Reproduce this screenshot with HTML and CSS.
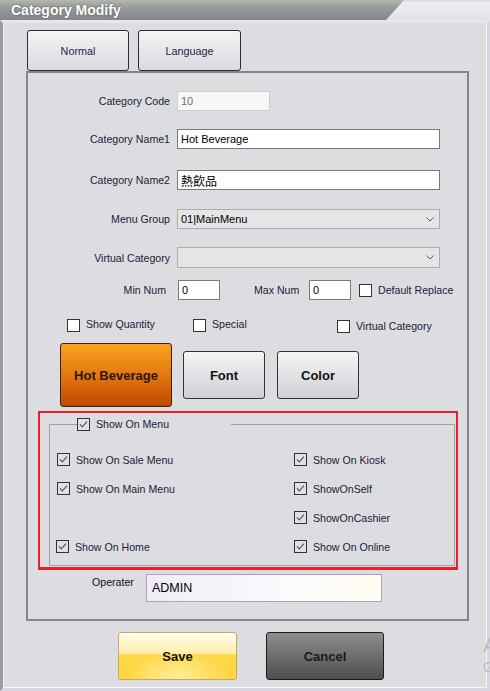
FILE: index.html
```html
<!DOCTYPE html>
<html>
<head>
<meta charset="utf-8">
<link rel="stylesheet" href="styles.css">
</head>
<body>
<div class="titlebar"><div class="title">Category Modify</div></div>
<div class="frame">
  <div class="tabs">
    <div class="tab tab-normal">Normal</div>
    <div class="tab tab-lang">Language</div>
  </div>
  <div class="panel">
    <div class="row r1"><span class="lbl">Category Code</span><div class="input code">10</div></div>
    <div class="row r2"><span class="lbl">Category Name1</span><div class="input wide">Hot Beverage</div></div>
    <div class="row r3"><span class="lbl">Category Name2</span><div class="input wide cjk">熱飲品</div></div>
    <div class="row r4"><span class="lbl">Menu Group</span><div class="select wide"><span>01|MainMenu</span><svg class="chev" width="8" height="5" viewBox="0 0 8 5"><path d="M0.5 0.5 4 4 7.5 0.5" fill="none" stroke="#5a5a5a" stroke-width="1"/></svg></div></div>
    <div class="row r5"><span class="lbl">Virtual Category</span><div class="select wide"><span></span><svg class="chev" width="8" height="5" viewBox="0 0 8 5"><path d="M0.5 0.5 4 4 7.5 0.5" fill="none" stroke="#5a5a5a" stroke-width="1"/></svg></div></div>
    <div class="nums">
      <span class="lbl min-lbl">Min Num</span>
      <div class="input num num-min">0</div>
      <span class="max-lbl">Max Num</span>
      <div class="input num num-max">0</div>
      <label class="ck ck-default"><span class="cb"></span><span>Default Replace</span></label>
    </div>
    <div class="checks">
      <label class="ck ck-qty"><span class="cb"></span><span class="up">Show Quantity</span></label>
      <label class="ck ck-special"><span class="cb"></span><span class="up">Special</span></label>
      <label class="ck ck-virtual"><span class="cb"></span><span>Virtual Category</span></label>
    </div>
    <div class="btns">
      <div class="btn hot">Hot Beverage</div>
      <div class="btn grey font-btn">Font</div>
      <div class="btn grey color-btn">Color</div>
    </div>
    <div class="redbox">
      <fieldset class="group">
        <legend class="ck"><span class="cb on"><svg width="11" height="11" viewBox="0 0 11 11"><path d="M2 5.4 4.3 7.9 9 2.6" fill="none" stroke="#555" stroke-width="1.2"/></svg></span><span>Show On Menu</span></legend>
        <div class="grid">
          <label class="ck"><span class="cb on"><svg width="11" height="11" viewBox="0 0 11 11"><path d="M2 5.4 4.3 7.9 9 2.6" fill="none" stroke="#555" stroke-width="1.2"/></svg></span><span>Show On Sale Menu</span></label>
          <label class="ck"><span class="cb on"><svg width="11" height="11" viewBox="0 0 11 11"><path d="M2 5.4 4.3 7.9 9 2.6" fill="none" stroke="#555" stroke-width="1.2"/></svg></span><span>Show On Kiosk</span></label>
          <label class="ck"><span class="cb on"><svg width="11" height="11" viewBox="0 0 11 11"><path d="M2 5.4 4.3 7.9 9 2.6" fill="none" stroke="#555" stroke-width="1.2"/></svg></span><span>Show On Main Menu</span></label>
          <label class="ck"><span class="cb on"><svg width="11" height="11" viewBox="0 0 11 11"><path d="M2 5.4 4.3 7.9 9 2.6" fill="none" stroke="#555" stroke-width="1.2"/></svg></span><span>ShowOnSelf</span></label>
          <div></div>
          <label class="ck"><span class="cb on"><svg width="11" height="11" viewBox="0 0 11 11"><path d="M2 5.4 4.3 7.9 9 2.6" fill="none" stroke="#555" stroke-width="1.2"/></svg></span><span>ShowOnCashier</span></label>
          <label class="ck ck-home"><span class="cb on"><svg width="11" height="11" viewBox="0 0 11 11"><path d="M2 5.4 4.3 7.9 9 2.6" fill="none" stroke="#555" stroke-width="1.2"/></svg></span><span>Show On Home</span></label>
          <label class="ck"><span class="cb on"><svg width="11" height="11" viewBox="0 0 11 11"><path d="M2 5.4 4.3 7.9 9 2.6" fill="none" stroke="#555" stroke-width="1.2"/></svg></span><span>Show On Online</span></label>
        </div>
      </fieldset>
    </div>
    <div class="oper">
      <span class="oper-lbl">Operater</span>
      <div class="oper-input">ADMIN</div>
    </div>
  </div>
  <div class="actions">
    <div class="btn save">Save</div>
    <div class="btn cancel">Cancel</div>
  </div>
</div>
<div class="watermark">
  <div class="wm1">Activate Windows</div>
  <div class="wm2">Go to Settings to activate Windows.</div>
</div>
</body>
</html>
```

FILE: styles.css
```css
* { box-sizing: border-box; }
html, body { margin: 0; padding: 0; }
body {
  width: 490px;
  height: 691px;
  overflow: hidden;
  position: relative;
  background: #dcdde1;
  font-family: "Liberation Sans", Arial, "Noto Sans CJK TC", sans-serif;
  font-size: 10.6px;
  color: #1c2038;
}

.titlebar {
  height: 20px;
  background: linear-gradient(#dcd8e4 0, #dcd8e4 1px, #eceef2 2px, #e3e4e8 100%);
}
.title {
  width: 404px;
  height: 20px;
  clip-path: polygon(0 0, 100% 0, calc(100% - 18px) 100%, 0 100%);
  background: linear-gradient(#b4b8ae 0%, #9ca09b 30%, #8c9090 70%, #82878a 100%);
  color: #fff;
  font-weight: bold;
  font-size: 14px;
  line-height: 20px;
  padding-left: 11px;
  text-shadow: 0 0 2px #4a4e52;
}

.frame {
  height: 671px;
  border-left: 3px solid #9a9e97;
  border-right: 3px solid #d8d4e1;
  border-top: 3px solid #e8e6ec;
  border-bottom: 3px solid #d8d4e1;
  box-shadow: inset 1px 0 0 #efeff2, inset -1px 0 0 #f5f4f8, inset 0 -1px 0 #f5f4f8;
}

.tabs {
  display: flex;
  gap: 9px;
  margin: 7px 0 0 24px;
}
.tab {
  height: 41px;
  border: 1px solid #2c2c30;
  border-radius: 3px;
  background: linear-gradient(#f4f4f7, #dadade);
  display: flex;
  align-items: center;
  justify-content: center;
  color: #2e2042;
  font-size: 10.8px;
}
.tab-normal { width: 102px; }
.tab-lang { width: 103px; }

.panel {
  margin-left: 23px;
  width: 443px;
  height: 550px;
  border: 2px solid #868686;
  display: flex;
  flex-direction: column;
}

.row {
  display: grid;
  grid-template-columns: 142px auto;
  column-gap: 7px;
  align-items: center;
  justify-content: start;
  height: 20px;
}
.lbl { text-align: right; white-space: nowrap; }
.r1 { margin-top: 18px; }
.r2 { margin-top: 18px; }
.r3 { margin-top: 21px; }
.r4 { margin-top: 19px; }
.r5 { margin-top: 18px; height: 21px; }

.input {
  height: 20px;
  background: #fff;
  border: 1px solid #7a7a7a;
  padding-left: 3px;
  font-size: 11px;
  color: #000;
  display: flex;
  align-items: center;
  white-space: nowrap;
}
.code {
  width: 93px;
  border-color: #cdcdd0;
  background: #f7f7f8;
  color: #6d6d6d;
}
.wide { width: 263px; }
.cjk { font-family: "Noto Sans CJK TC", sans-serif; font-size: 12px; }

.select {
  height: 100%;
  background: #e5e5e7;
  border: 1px solid #adadaf;
  display: flex;
  align-items: center;
  justify-content: space-between;
  padding: 0 5px 0 3px;
  font-size: 11px;
  color: #000;
}
.chev { display: block; }

.nums {
  display: flex;
  align-items: center;
  height: 20px;
  margin-top: 12px;
}
.min-lbl { width: 138px; }
.num { width: 42px; }
.num-min { margin-left: 12px; }
.max-lbl { margin-left: 34px; width: 45px; white-space: nowrap; }
.num-max { margin-left: 10px; }
.ck-default { margin-left: 8px; }

.ck {
  display: flex;
  align-items: center;
  gap: 6px;
  white-space: nowrap;
  color: #1c2038;
}
.cb {
  width: 13px;
  height: 13px;
  flex: none;
  border: 1px solid #333;
  background: #fff;
  display: flex;
  align-items: center;
  justify-content: center;
}
.cb.on { background: #dfe0e4; }
.cb svg { display: block; }

.checks {
  display: flex;
  align-items: center;
  height: 14px;
  margin-top: 18px;
  padding-left: 39px;
}
.up { margin-top: -2px; }
.ck-qty { width: 126px; }
.ck-special { width: 144px; }
.ck-virtual { margin-top: 2px; }

.btns {
  display: flex;
  align-items: center;
  height: 64px;
  margin-top: 11px;
  padding-left: 32px;
}
.btn {
  display: flex;
  align-items: center;
  justify-content: center;
  border-radius: 3px;
  font-weight: bold;
  font-size: 13px;
  color: #111;
}
.hot {
  width: 112px;
  height: 64px;
  border: 1px solid #3a2410;
  background: linear-gradient(#f9a420, #e27812 50%, #c04800);
  color: #2a160a;
}
.grey {
  width: 82px;
  height: 48px;
  border: 1px solid #333;
  background: linear-gradient(#f5f5f8, #d0d0d4);
}
.font-btn { margin-left: 11px; }
.color-btn { margin-left: 12px; }

.redbox {
  margin: 4px 0 0 10px;
  width: 420px;
  height: 159px;
  border: 2px solid #e8202a;
  border-bottom-width: 3px;
  padding: 4px 0 1px 9px;
}
.group {
  margin: 0;
  width: 406px;
  min-width: 0;
  padding: 14px 0 4px 7px;
  border: 1px solid #a2a2a6;
}
.group legend {
  margin-left: 20px;
  padding: 0;
  height: 14px;
  width: 154px;
}
.grid {
  display: grid;
  grid-template-columns: 237px 1fr;
  grid-template-rows: repeat(4, 29px);
  align-items: center;
}
.ck-home { margin-left: -1px; }

.oper {
  display: flex;
  align-items: flex-start;
  height: 28px;
  margin-top: 4px;
  padding-left: 64px;
}
.oper-lbl {
  width: 54px;
  line-height: 14px;
  margin-top: 1px;
  color: #111;
}
.oper-input {
  width: 236px;
  height: 28px;
  border: 1px solid #aaa4ba;
  background: linear-gradient(100deg, #f1ecf5, #fbf9fc 55%, #fffcf0);
  padding-left: 5px;
  font-size: 12.5px;
  color: #000;
  display: flex;
  align-items: center;
}

.actions {
  display: flex;
  gap: 29px;
  margin-top: 11px;
  padding-left: 115px;
}
.save {
  width: 119px;
  height: 48px;
  border: 1px solid #c8a95c;
  background:
    radial-gradient(ellipse 45% 60% at 50% 100%, rgba(255, 240, 170, 0.9), rgba(255, 240, 170, 0) 100%),
    linear-gradient(#fffdf0 0%, #ffeea8 45%, #ffd84a 47%, #ffd640 100%);
}
.cancel {
  width: 118px;
  height: 48px;
  border: 1px solid #1c1c1c;
  background: linear-gradient(#8e8e8e, #4e4e4e);
  color: #1a1a1a;
}

.watermark {
  position: absolute;
  left: 483px;
  top: 634px;
  color: #bcbdc2;
  white-space: nowrap;
}
.wm1 { font-size: 21px; line-height: 21px; }
.wm2 { font-size: 14px; line-height: 14px; margin-top: 5px; }
```
